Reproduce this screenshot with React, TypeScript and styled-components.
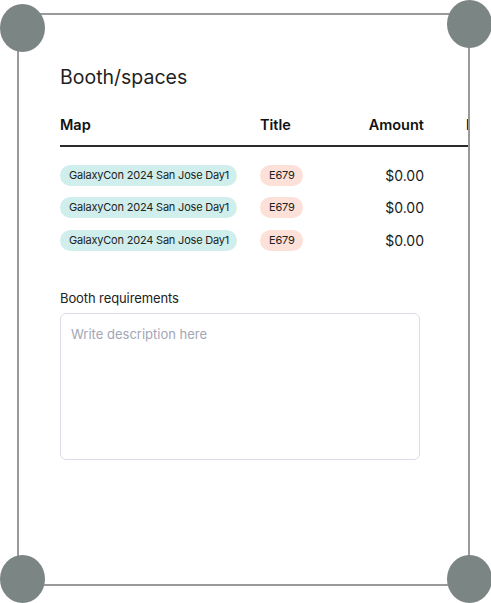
import * as React from "react";
import styled, { createGlobalStyle } from "styled-components";

const GlobalStyle = createGlobalStyle`
  html, body {
    margin: 0;
    padding: 0;
    background: #ffffff;
    font-family: Inter, "Noto Sans", sans-serif;
    color: #1a1a1a;
  }
`;

const Page = styled.div`
  padding: 13px 0 17px 17px;
`;

const Frame = styled.div`
  position: relative;
  width: 453px;
  height: 573px;
`;

const Card = styled.div`
  box-sizing: border-box;
  width: 100%;
  height: 100%;
  border: 2px solid #9a9a9a;
  border-radius: 12px;
  overflow: hidden;
  background: #fff;
  padding: 50px 0 0 41px;
`;

const Handle = styled.span<{ $top?: boolean; $left?: boolean }>`
  position: absolute;
  width: 45px;
  height: 48px;
  border-radius: 50%;
  background: #7a8584;
  ${(p) => (p.$left ? "left: -17px;" : "right: -22px;")}
  ${(p) => (p.$top ? (p.$left ? "top: -9px;" : "top: -13px;") : "bottom: -17px;")}
`;

const Heading = styled.h2`
  margin: 0;
  font-size: 19.5px;
  font-weight: 400;
  line-height: 24px;
  color: #1f1f1f;
`;

const Table = styled.div`
  margin-top: 24px;
  width: 560px;
`;

const Row = styled.div<{ $head?: boolean }>`
  display: grid;
  grid-template-columns: 200px 90px 74px 150px;
  align-items: center;
  height: ${(p) => (p.$head ? "32px" : "32.5px")};
  ${(p) => (p.$head ? "border-bottom: 2px solid #2b2b2b; margin-bottom: 12px;" : "")}
`;

const HeadCell = styled.div<{ $right?: boolean; $pad?: boolean }>`
  font-size: 14.5px;
  font-weight: 600;
  color: #111;
  text-align: ${(p) => (p.$right ? "right" : "left")};
  padding-left: ${(p) => (p.$pad ? "42px" : "0")};
  padding-bottom: 10px;
  white-space: nowrap;
`;

const Cell = styled.div<{ $right?: boolean }>`
  text-align: ${(p) => (p.$right ? "right" : "left")};
  font-size: 14px;
  color: #1a1a1a;
`;

const Pill = styled.span<{ $tone: "teal" | "peach" }>`
  display: inline-block;
  height: 21px;
  line-height: 21px;
  padding: 0 8px 0 9px;
  border-radius: 11px;
  font-size: 11px;
  letter-spacing: -0.2px;
  color: #222;
  background: ${(p) => (p.$tone === "teal" ? "#d0eeec" : "#fde0d7")};
`;

const Field = styled.div`
  margin-top: 33px;
  width: 360px;
`;

const Label = styled.label`
  display: block;
  font-size: 13px;
  color: #222;
  letter-spacing: -0.1px;
  margin-bottom: 7px;
`;

const TextArea = styled.textarea`
  box-sizing: border-box;
  display: block;
  width: 360px;
  height: 147px;
  border: 1px solid #dcdce4;
  border-radius: 6px;
  padding: 12px 10px;
  font-family: inherit;
  font-size: 13px;
  resize: none;
  outline: none;
  &::placeholder {
    color: #a3a6b4;
  }
`;

const rows = [1, 2, 3].map(() => ({
  map: "GalaxyCon 2024 San Jose Day1",
  title: "E679",
  amount: "$0.00",
}));

export default function App() {
  return (
    <Page>
      <GlobalStyle />
      <Frame>
        <Card>
          <Heading>Booth/spaces</Heading>
          <Table>
            <Row $head>
              <HeadCell>Map</HeadCell>
              <HeadCell>Title</HeadCell>
              <HeadCell $right>Amount</HeadCell>
              <HeadCell $pad>Payment</HeadCell>
            </Row>
            {rows.map((r, i) => (
              <Row key={i}>
                <Cell>
                  <Pill $tone="teal">{r.map}</Pill>
                </Cell>
                <Cell>
                  <Pill $tone="peach">{r.title}</Pill>
                </Cell>
                <Cell $right>{r.amount}</Cell>
                <Cell />
              </Row>
            ))}
          </Table>
          <Field>
            <Label>Booth requirements</Label>
            <TextArea placeholder="Write description here" />
          </Field>
        </Card>
        <Handle $top $left />
        <Handle $top />
        <Handle $left />
        <Handle />
      </Frame>
    </Page>
  );
}
